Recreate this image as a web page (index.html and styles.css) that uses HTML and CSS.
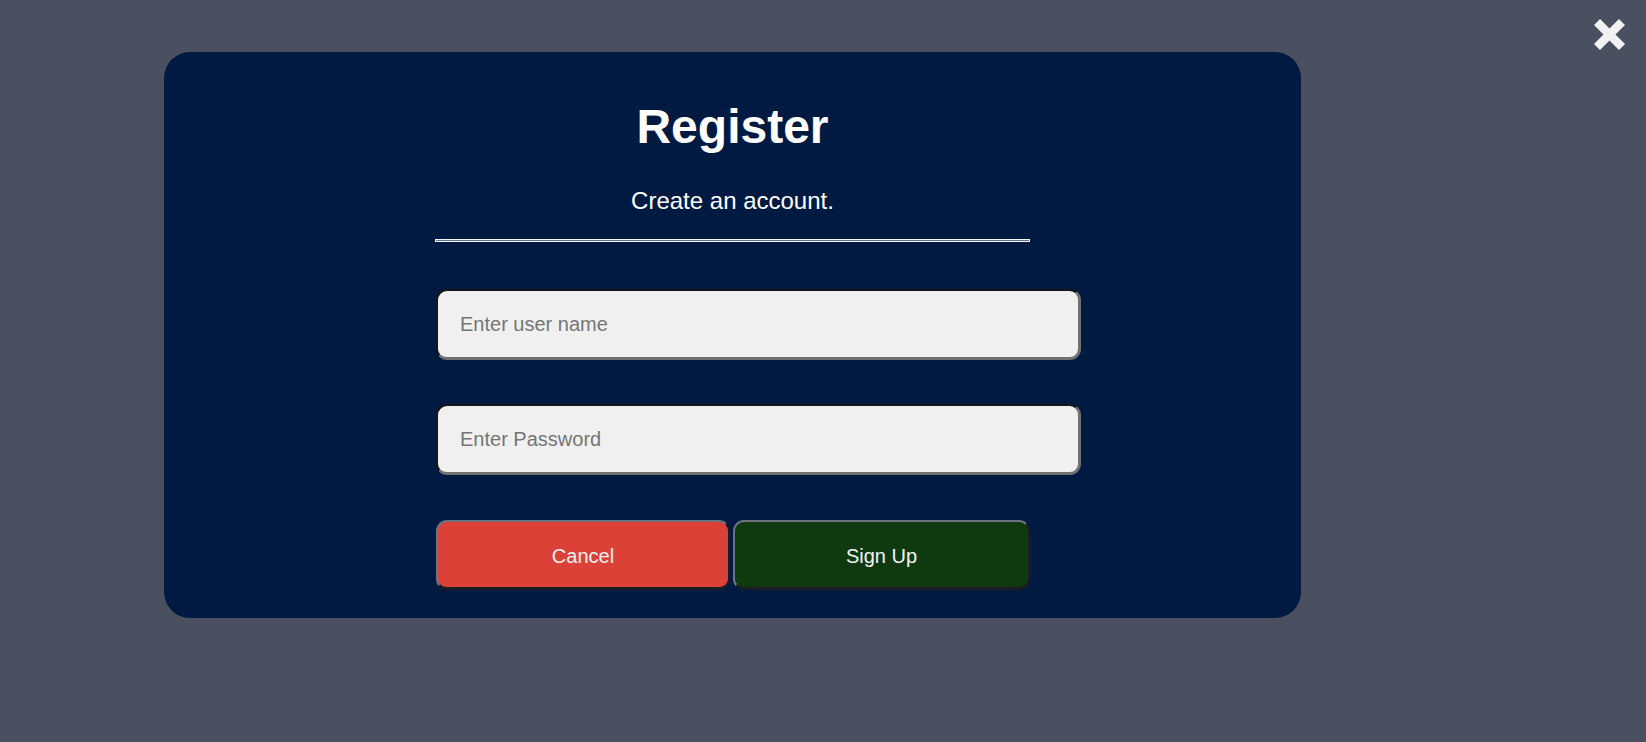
FILE: index.html
```html
<!DOCTYPE html>
<html lang="en">
<head>
<meta charset="utf-8">
<title>Register</title>
<link rel="stylesheet" href="styles.css">
</head>
<body>
<button class="close" aria-label="Close">
  <svg width="31" height="31" viewBox="0 0 31 31"><path d="M3 3 L28 28 M28 3 L3 28" stroke="#f2f2f2" stroke-width="8.5" stroke-linecap="butt" fill="none"/></svg>
</button>
<div class="modal">
  <h1 class="title">Register</h1>
  <p class="subtitle">Create an account.</p>
  <form class="form">
    <hr class="rule">
    <input class="field" type="text" placeholder="Enter user name">
    <input class="field" type="password" placeholder="Enter Password">
    <div class="actions">
      <button type="button" class="btn btn-cancel">Cancel</button>
      <button type="button" class="btn btn-signup">Sign Up</button>
    </div>
  </form>
</div>
</body>
</html>
```

FILE: styles.css
```css
html, body {
  margin: 0;
  padding: 0;
  height: 100%;
}
body {
  background: #4a5060;
  font-family: "Liberation Sans", Arial, sans-serif;
  overflow: hidden;
  padding-top: 52px;
  box-sizing: border-box;
}
.close {
  position: absolute;
  top: 19px;
  left: 1594px;
  width: 31px;
  height: 31px;
  padding: 0;
  border: 0;
  background: none;
  display: block;
}
.close svg { display: block; }
.modal {
  margin-left: 164px;
  width: 1137px;
  height: 566px;
  background: #001a42;
  border-radius: 26px;
  display: flex;
  flex-direction: column;
  align-items: center;
  padding-top: 47px;
  box-sizing: border-box;
}
.title {
  margin: 0;
  font-size: 48px;
  font-weight: bold;
  color: #ffffff;
  line-height: 55px;
}
.subtitle {
  margin: 33px 0 0;
  font-size: 24px;
  color: #ffffff;
  line-height: 28px;
}
.form {
  width: 595px;
  margin-top: 24px;
  display: flex;
  flex-direction: column;
}
.rule {
  margin: 0;
  height: 1px;
  background: #5f7390;
  border: 1px solid #f4f8fc;
}
.field {
  box-sizing: border-box;
  width: 645px;
  height: 71px;
  margin: 0 0 0 1px;
  padding: 0 22px;
  font-family: "Liberation Sans", Arial, sans-serif;
  font-size: 20px;
  color: #333;
  background: #f0f0f0;
  border-style: solid;
  border-width: 2px 3px 3px 2px;
  border-color: #15161c #707070 #707070 #15161c;
  border-radius: 11px;
  outline: none;
}
.field::placeholder { color: #757575; }
.form .field:first-of-type { margin-top: 47px; }
.field + .field { margin-top: 44px; }
.actions {
  display: flex;
  gap: 3px;
  margin-top: 45px;
  margin-left: 1px;
}
.btn {
  box-sizing: border-box;
  width: 294px;
  height: 70px;
  font-family: "Liberation Sans", Arial, sans-serif;
  font-size: 20px;
  color: #f2f2f2;
  border-style: solid;
  border-width: 2px 2px 3px 2px;
  border-color: #6b7280 #1b1d24 #1b1d24 #6b7280;
  border-radius: 11px;
  padding: 3px 0 0;
  flex: none;
}
.btn-cancel { background: #db4136; }
.btn-signup { background: #0f3a0f; width: 297px; }
```
